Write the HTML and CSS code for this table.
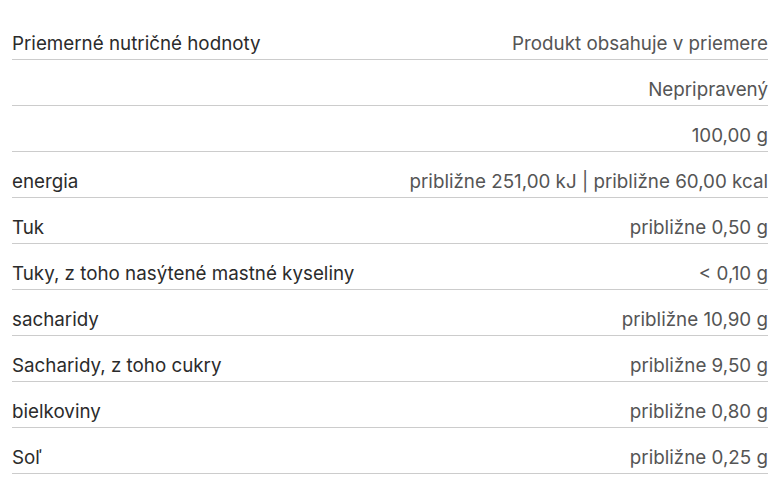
FILE: index.html
```html
<!DOCTYPE html>
<html lang="sk">
<head>
<meta charset="utf-8">
<link rel="stylesheet" href="styles.css">
</head>
<body>
<div class="table">
  <div class="row"><div class="label">Priemerné nutričné hodnoty</div><div class="value">Produkt obsahuje v priemere</div></div>
  <div class="row"><div class="label"></div><div class="value">Nepripravený</div></div>
  <div class="row"><div class="label"></div><div class="value">100,00 g</div></div>
  <div class="row"><div class="label">energia</div><div class="value">približne 251,00 kJ | približne 60,00 kcal</div></div>
  <div class="row"><div class="label">Tuk</div><div class="value">približne 0,50 g</div></div>
  <div class="row"><div class="label">Tuky, z toho nasýtené mastné kyseliny</div><div class="value">&lt; 0,10 g</div></div>
  <div class="row"><div class="label">sacharidy</div><div class="value">približne 10,90 g</div></div>
  <div class="row"><div class="label">Sacharidy, z toho cukry</div><div class="value">približne 9,50 g</div></div>
  <div class="row"><div class="label">bielkoviny</div><div class="value">približne 0,80 g</div></div>
  <div class="row"><div class="label">Soľ</div><div class="value">približne 0,25 g</div></div>
</div>
</body>
</html>
```
FILE: styles.css
```css
html, body { margin: 0; padding: 0; background: #fff; }
body { font-family: "Inter", "Noto Sans", sans-serif; font-size: 18.8px; }
.table { margin: 14px 14px 0 12px; display: flex; flex-direction: column; }
.row {
  display: flex; justify-content: space-between; align-items: flex-end;
  height: 45px; box-sizing: content-box;
  border-bottom: 1px solid #cccccc;
  line-height: 22px;
  padding: 0;
}
.label, .value { padding-bottom: 4px; }
.label { color: #2b2b2b; }
.value { color: #555555; text-align: right; }
```
